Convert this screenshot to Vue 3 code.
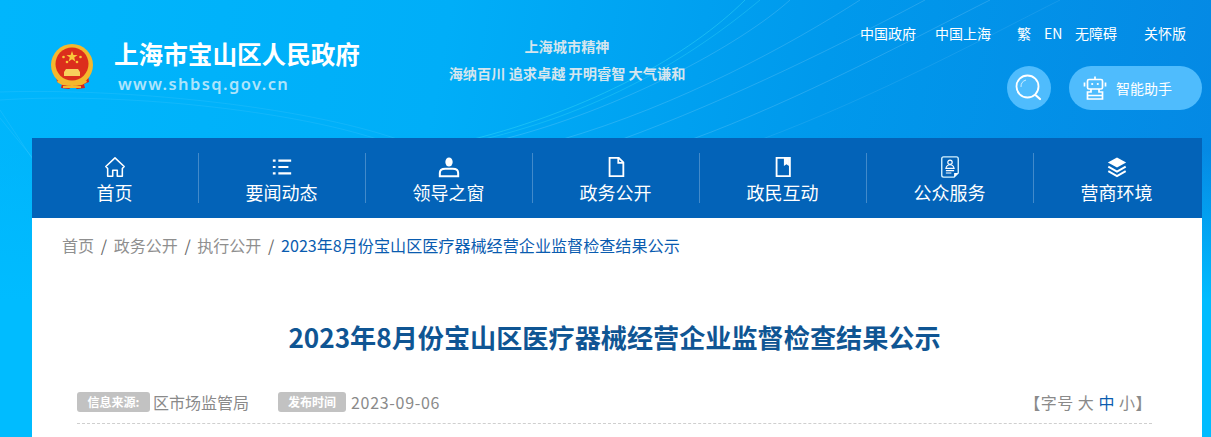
<script setup>
const topLinks = [
  { t: '中国政府', w: 75 },
  { t: '中国上海', w: 82 },
  { t: '繁', w: 27 },
  { t: 'EN', w: 31 },
  { t: '无障碍', w: 69 },
  { t: '关怀版', w: 43 }
]
const nav = [
  { t: '首页', i: 'home' },
  { t: '要闻动态', i: 'list' },
  { t: '领导之窗', i: 'user' },
  { t: '政务公开', i: 'doc' },
  { t: '政民互动', i: 'book' },
  { t: '公众服务', i: 'card' },
  { t: '营商环境', i: 'layers' }
]
const crumbs = ['首页', '政务公开', '执行公开']
const title = '2023年8月份宝山区医疗器械经营企业监督检查结果公示'
</script>

<template>
  <div class="page">
    <svg class="bg-lines" width="1211" height="437" viewBox="0 0 1211 437" fill="none">
      <g stroke="#fff" stroke-opacity=".07">
        <path d="M0 110C40 170 70 215 100 270" />
        <path d="M0 118C50 180 90 225 130 270" />
        <path d="M0 92C120 88 300 105 400 140" />
        <path d="M0 100C120 92 290 110 380 140" />
      </g>
      <g stroke="#fff" stroke-opacity=".14">
        <path d="M470 140C590 110 690 55 745 0" stroke="#2fd3f5" stroke-opacity=".5" />
        <path d="M480 140C610 110 700 50 760 0" stroke="#2fd3f5" stroke-opacity=".4" />
        <path d="M500 140C620 110 740 45 790 0" />
        <path d="M560 140C680 105 790 45 860 0" />
        <path d="M620 140C730 100 850 40 925 0" />
        <path d="M690 140C800 100 920 35 990 0" />
        <path d="M760 140C880 95 990 35 1060 0" stroke-opacity=".08" />
      </g>
    </svg>

    <header class="head">
      <div class="logo">
        <svg class="emblem" width="42" height="46" viewBox="0 0 42 46">
          <path d="M5 31h32l1 7-5 2 1 4-8 1-4-3-4 3-8-1 1-4-5-2z" fill="#d9241a" />
          <circle cx="21" cy="21" r="21" fill="#f4b82d" />
          <circle cx="21" cy="20" r="16.5" fill="#dc2e1c" />
          <polygon points="21,7 22.4,11 26.6,11 23.2,13.6 24.4,17.6 21,15.2 17.6,17.6 18.8,13.6 15.4,11 19.6,11" fill="#f9c83a" />
          <circle cx="12.500" cy="13" r="1.300" fill="#f9c83a" />
          <circle cx="29.500" cy="13" r="1.300" fill="#f9c83a" />
          <circle cx="16" cy="18" r="1.300" fill="#f9c83a" />
          <circle cx="26" cy="18" r="1.300" fill="#f9c83a" />
          <path d="M15 25h12l2 3v4H13v-4z" fill="#f8d05c" />
          <path d="M7 36q7 6 14 1q7 5 14-1l1 2q-8 6-15 2q-7 4-15-2z" fill="#f4b82d" />
          <path d="M12 43h18" stroke="#f4b82d" stroke-width="2" />
        </svg>
        <div class="logo-text">
          <div class="site-name">上海市宝山区人民政府</div>
          <div class="site-url">www.shbsq.gov.cn</div>
        </div>
      </div>

      <div class="motto">
        <div>上海城市精神</div>
        <div>海纳百川 追求卓越 开明睿智 大气谦和</div>
      </div>

      <div class="tools">
        <div class="top-links">
          <span v-for="l in topLinks" :key="l.t" :style="{ width: l.w + 'px' }">{{ l.t }}</span>
        </div>
        <div class="actions">
          <div class="search">
            <svg width="30" height="30" viewBox="0 0 30 30" fill="none" stroke="#fff">
              <circle cx="13.500" cy="13.500" r="11" stroke-width="1.800" />
              <path d="M7 14a7 7 0 0 1 5-7" stroke-width="1" stroke-opacity=".7" />
              <path d="M22 22.500l4 3.500" stroke-width="2.200" stroke-linecap="round" />
            </svg>
          </div>
          <div class="assistant">
            <svg width="24" height="24" viewBox="0 0 24 24" fill="none" stroke="#fff" stroke-width="1.700">
              <path d="M12 .5v3" />
              <rect x="4.500" y="3.500" width="15" height="9.500" rx="1.500" />
              <circle cx="9.200" cy="8" r="1.100" fill="#fff" stroke="none" />
              <circle cx="14.800" cy="8" r="1.100" fill="#fff" stroke="none" />
              <path d="M1.500 6.500v4M22.500 6.500v4" />
              <path d="M8 13v3H4.500v7h15v-3.500h-15M16 13v3h3.500v3.500" />
            </svg>
            <span>智能助手</span>
          </div>
        </div>
      </div>
    </header>

    <nav class="nav">
      <a v-for="n in nav" :key="n.t" class="nav-item">
        <svg class="nav-icon" width="24" height="24" viewBox="0 0 24 24" fill="none" stroke="#fff" stroke-width="1.700">
          <template v-if="n.i === 'home'">
            <path d="M2 11.500 12 2l10 9.500-2 2.200V22h-5.500v-6.500h-5V22H4v-8.300z" stroke-linejoin="round" />
          </template>
          <template v-else-if="n.i === 'list'">
            <path d="M2 5h3M2 12h3M2 19h3" stroke-width="2.400" />
            <path d="M8 5h14M8 12h11M8 19h14" stroke-width="2.400" />
          </template>
          <template v-else-if="n.i === 'user'">
            <ellipse cx="12" cy="6.500" rx="4" ry="5" fill="#fff" stroke="none" />
            <path d="M8 14h8q6 0 6 4.500V22H2v-3.500q0-4.500 6-4.500z" stroke-width="2.200" />
          </template>
          <template v-else-if="n.i === 'doc'">
            <path d="M5 2h10l5 5v15H5z" stroke-width="2" />
            <path d="M14.500 2v5.500H20" stroke-width="2" />
          </template>
          <template v-else-if="n.i === 'book'">
            <path d="M5 2h14.500v20H5z" stroke-width="2" />
            <path d="M13 2h5.500v9l-2.750-2-2.750 2z" fill="#fff" stroke="none" />
          </template>
          <template v-else-if="n.i === 'card'">
            <path d="M5 1h14q2 0 2 2v15.500L16.500 23H5q-2 0-2-2V3q0-2 2-2z" stroke="#d6f3ff" stroke-width="1.500" />
            <circle cx="12" cy="6.800" r="2.400" stroke-width="1.300" />
            <path d="M7.500 13.500q1-4 4.500-4t4.500 4zM7.500 16h9M7.500 18.500h6" stroke-width="1.200" />
            <path d="M16.500 23v-4.500H21z" fill="#fff" stroke="none" />
          </template>
          <template v-else>
            <path d="M12 1.500 22 7l-10 5.500L2 7z" fill="#fff" stroke="none" />
            <path d="M2.500 11.500 12 17l9.500-5.500M2.500 16.500 12 22l9.500-5.500" stroke-width="2.200" />
          </template>
        </svg>
        <span>{{ n.t }}</span>
      </a>
    </nav>

    <main class="content">
      <div class="crumbs">
        <template v-for="c in crumbs" :key="c">
          <span class="crumb">{{ c }}</span><i class="slash">/</i>
        </template>
        <span class="crumb-current">{{ title }}</span>
      </div>
      <h1 class="title">{{ title }}</h1>
      <div class="meta">
        <span class="tag tag-source">信息来源:</span>
        <span class="meta-val source">区市场监管局</span>
        <span class="tag tag-date">发布时间</span>
        <span class="meta-val date">2023-09-06</span>
        <div class="font-size">【字号 大 <b>中</b> 小】</div>
      </div>
    </main>
  </div>
</template>

<style>
html, body { margin: 0; padding: 0; background: #00bcff; overflow: hidden; }
</style>

<style scoped>
.page {
  position: relative;
  width: 1211px;
  height: 437px;
  overflow: hidden;
  font-family: "Noto Sans CJK SC", "Noto Sans", sans-serif;
  background:
    linear-gradient(to bottom, rgba(0, 188, 255, 0) 150px, #00bcff 300px),
    linear-gradient(100deg, #00b6fc 0%, #00aef8 35%, #0099ec 65%, #0587e3 100%);
}
.bg-lines { position: absolute; inset: 0; }
.head {
  position: relative;
  display: flex;
  height: 138px;
  box-sizing: border-box;
}
.logo {
  display: flex;
  align-items: flex-start;
  width: 448px;
  padding: 44px 0 0 51px;
  box-sizing: border-box;
}
.emblem { flex: none; }
.logo-text { margin: -6px 0 0 21px; }
.site-name {
  font-size: 24.600px;
  line-height: 30px;
  font-weight: 700;
  color: #fff;
  white-space: nowrap;
}
.site-url {
  margin: 6px 0 0 4px;
  font-family: "Noto Sans", sans-serif;
  font-size: 16.500px;
  line-height: 20px;
  font-weight: 600;
  letter-spacing: 1.400px;
  color: #aee4fb;
}
.motto {
  width: 238px;
  padding-top: 33px;
  box-sizing: border-box;
  text-align: center;
  font-size: 14.200px;
  font-weight: 700;
  line-height: 27px;
  color: #d4e5ee;
  white-space: nowrap;
}
.tools { flex: 1; position: relative; }
.top-links {
  display: flex;
  padding: 22px 0 0 174px;
  height: 22px;
  font-size: 14px;
  line-height: 22px;
  color: #fff;
  white-space: nowrap;
}
.top-links span { flex: none; }
.actions {
  display: flex;
  gap: 18px;
  margin: 22px 0 0 321px;
}
.search {
  width: 44px;
  height: 44px;
  border-radius: 50%;
  background: #4fbcfd;
  display: flex;
  align-items: center;
  justify-content: center;
}
.assistant {
  display: flex;
  align-items: center;
  width: 133px;
  height: 44px;
  padding-left: 14px;
  box-sizing: border-box;
  border-radius: 22px;
  background: #4fbcfd;
  color: #fff;
  font-size: 14px;
}
.assistant span { margin-left: 9px; }
.nav {
  position: relative;
  display: flex;
  width: 1170px;
  height: 80px;
  margin-left: 32px;
  background: #0363b8;
}
.nav-item {
  position: relative;
  flex: 0 0 167px;
  display: flex;
  flex-direction: column;
  align-items: center;
  padding: 18px 2px 0 0;
  box-sizing: border-box;
  color: #fff;
  font-size: 18px;
  line-height: 28px;
}
.nav-item + .nav-item::before {
  content: "";
  position: absolute;
  left: -1px;
  top: 15px;
  height: 50px;
  width: 1px;
  background: rgba(255, 255, 255, .25);
}
.nav-icon { width: 22px; height: 22px; }
.nav-item span { margin-top: 0; }
.content {
  position: relative;
  width: 1170px;
  height: 219px;
  margin-left: 32px;
  background: #fff;
  padding: 0 50px 0 45px;
  box-sizing: border-box;
}
.crumbs {
  display: flex;
  align-items: center;
  height: 54px;
  margin-left: -15px;
  font-size: 16px;
  color: #8c8c8c;
  white-space: nowrap;
}
.crumb { color: #8f8f8f; }
.slash { font-style: normal; margin: 0 6.700px; color: #666; }
.crumb-current { color: #0a5cb0; font-size: 16.100px; }
.title {
  margin: 45px 0 0;
  text-align: center;
  font-size: 26.150px;
  line-height: 40px;
  font-weight: 700;
  color: #0f5593;
  white-space: nowrap;
}
.meta {
  display: flex;
  align-items: center;
  height: 22px;
  margin-top: 34px;
  padding-bottom: 10px;
  border-bottom: 1px dashed #cfcfcf;
  box-sizing: content-box;
  font-size: 16px;
  color: #8a8a8a;
}
.tag {
  display: inline-block;
  height: 20px;
  line-height: 20px;
  border-radius: 3px;
  background: #c2c2c2;
  color: #fff;
  font-size: 12px;
  font-weight: 700;
  text-align: center;
}
.tag-source { width: 73px; margin-right: 3px; }
.tag-date { width: 68px; margin-right: 5px; }
.source { width: 125px; }
.date { letter-spacing: .7px; }
.font-size { margin-left: auto; letter-spacing: .5px; color: #8a8a8a; margin-right: 0; }
.font-size b { font-weight: 400; color: #0a5cb0; }
</style>
